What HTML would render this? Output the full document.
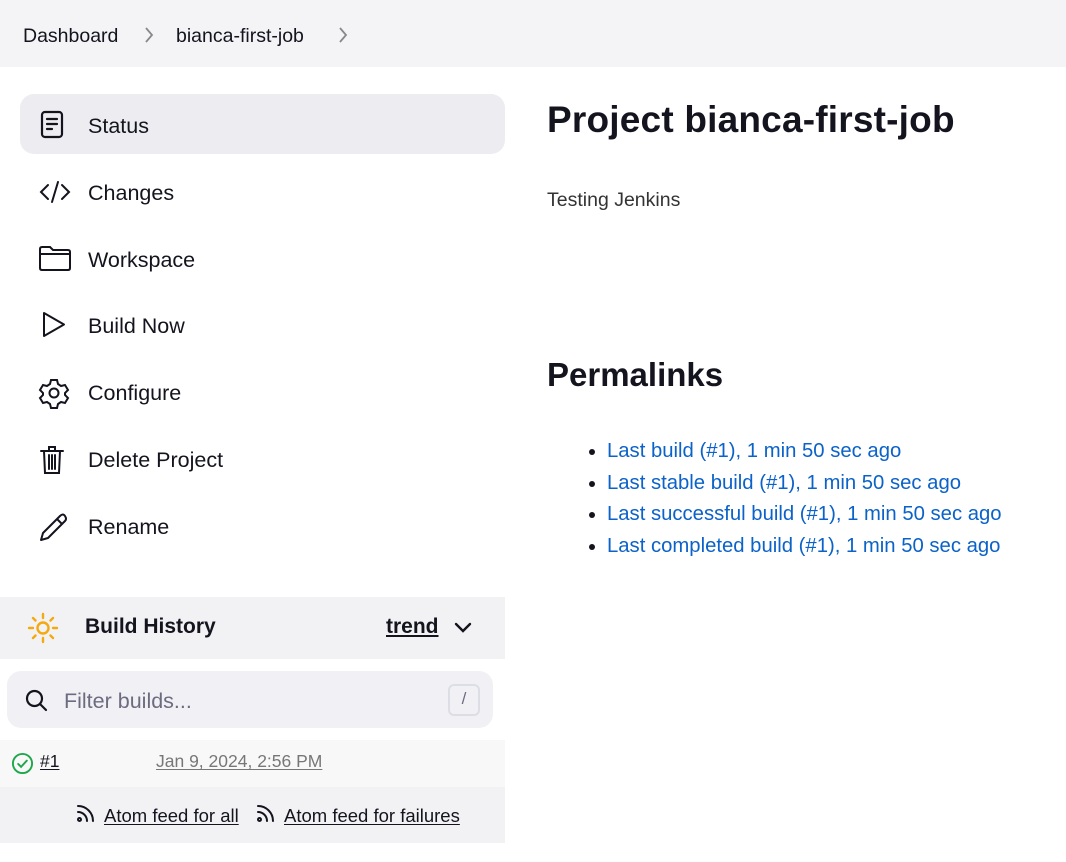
<!DOCTYPE html>
<html><head><style>
*{margin:0;padding:0;box-sizing:border-box}
body{width:1066px;height:862px;background:#fff;font-family:"Liberation Sans",sans-serif;color:#14141f;position:relative;overflow:hidden}
.bc{position:absolute;left:0;top:0;width:1066px;height:67px;background:#f4f4f6;font-size:19.5px}
.bc span{position:absolute;top:25px}
.bc svg{position:absolute;top:27px}
.nav{position:absolute;left:20px;width:485px;height:60px;font-size:21.5px}
.nav svg{position:absolute;left:18px;top:16px}
.nav span{position:absolute;left:68px;top:20px}
.sel{background:#ececf1;border-radius:14px}
h1{position:absolute;left:547px;top:99px;font-size:37px;font-weight:bold;letter-spacing:0.2px}
h2{position:absolute;left:547px;top:356px;font-size:33px;font-weight:bold}
.desc{position:absolute;left:547px;top:189px;font-size:19.5px;color:#333}
ul{position:absolute;left:607px;top:436px;font-size:20.3px;line-height:31.7px;color:#0b62c8}
li::marker{color:#14141f}
.bh{position:absolute;left:0;top:597px;width:505px;height:62px;background:#f2f2f5}
.fb{position:absolute;left:7px;top:671px;width:486px;height:57px;background:#f1f1f5;border-radius:14px}
.row{position:absolute;left:0;top:740px;width:505px;height:47px;background:#f8f8f8}
.feed{position:absolute;left:0;top:787px;width:505px;height:56px;background:#f2f2f5;font-size:18.5px}
u{text-underline-offset:2px}
</style></head><body>
<div class="bc"><span style="left:23px">Dashboard</span><svg style="left:144px" width="10" height="16" viewBox="0 0 10 16" fill="none" stroke="#888" stroke-width="1.8"><path d="M2 1l6 7-6 7"/></svg><span style="left:176px">bianca-first-job</span><svg style="left:338px" width="10" height="16" viewBox="0 0 10 16" fill="none" stroke="#888" stroke-width="1.8"><path d="M2 1l6 7-6 7"/></svg></div>

<div class="nav sel" style="top:94px"><svg width="30" height="30" viewBox="0 0 30 30" fill="none" stroke="#14141f" stroke-width="2.2" stroke-linecap="round"><rect x="4" y="2" width="20" height="25" rx="3"/><path d="M9 9h10M9 14h10M9 19h5"/></svg><span>Status</span></div>
<div class="nav" style="top:161px"><svg width="34" height="30" viewBox="0 0 34 30" fill="none" stroke="#14141f" stroke-width="2" stroke-linecap="round"><path d="M10 8 3 15l7 7M24 8l7 7-7 7M20 5l-6 20"/></svg><span>Changes</span></div>
<div class="nav" style="top:228px"><svg width="34" height="30" viewBox="0 0 34 30" fill="none" stroke="#14141f" stroke-width="2"><path d="M2 5q0-2 2-2h8l3 3h15q2 0 2 2v16q0 2-2 2H4q-2 0-2-2z M2 10h30"/></svg><span>Workspace</span></div>
<div class="nav" style="top:294px"><svg width="30" height="30" viewBox="0 0 30 30" fill="none" stroke="#14141f" stroke-width="2" stroke-linejoin="round"><path d="M6 3v23l20-11.5z"/></svg><span>Build Now</span></div>
<div class="nav" style="top:361px"><svg width="32" height="32" viewBox="0 0 32 32" fill="none" stroke="#14141f" stroke-width="2"><path d="M13 3h6l1 4 3 2 4-1 3 5-3 3v2l3 3-3 5-4-1-3 2-1 4h-6l-1-4-3-2-4 1-3-5 3-3v-2L2 13l3-5 4 1 3-2z"/><circle cx="16" cy="16" r="4.5"/></svg><span>Configure</span></div>
<div class="nav" style="top:428px"><svg width="30" height="32" viewBox="0 0 30 32" fill="none" stroke="#14141f" stroke-width="2" stroke-linecap="round"><path d="M3 7h22M11 7V3h6v4M6 7l1 22h14l1-22M11 11v14M14 11v14M17 11v14"/></svg><span>Delete Project</span></div>
<div class="nav" style="top:495px"><svg width="32" height="32" viewBox="0 0 32 32" fill="none" stroke="#14141f" stroke-width="2" stroke-linejoin="round"><path d="M3 29l2-7L22 5q3-3 5 0t0 5L10 27z M19 8l5 5"/></svg><span>Rename</span></div>

<h1>Project bianca-first-job</h1>
<div class="desc">Testing Jenkins</div>
<h2>Permalinks</h2>
<ul>
<li>Last build (#1), 1 min 50 sec ago</li>
<li>Last stable build (#1), 1 min 50 sec ago</li>
<li>Last successful build (#1), 1 min 50 sec ago</li>
<li>Last completed build (#1), 1 min 50 sec ago</li>
</ul>

<div class="bh">
<svg style="position:absolute;left:26px;top:14px" width="34" height="34" viewBox="0 0 34 34" fill="none" stroke="#f5a90e" stroke-width="2.4" stroke-linecap="round"><circle cx="17" cy="17" r="5.5"/><path d="M17 3v4M17 27v4M3 17h4M27 17h4M7 7l2.5 2.5M24.5 24.5 27 27M7 27l2.5-2.5M24.5 9.5 27 7"/></svg>
<span style="position:absolute;left:85px;top:18px;font-size:21px;font-weight:bold">Build History</span>
<span style="position:absolute;left:386px;top:18px;font-size:21px;font-weight:bold"><u>trend</u></span>
<svg style="position:absolute;left:453px;top:24px" width="20" height="14" viewBox="0 0 20 14" fill="none" stroke="#14141f" stroke-width="2.4" stroke-linecap="round"><path d="M3 3l7 7 7-7"/></svg>
</div>
<div class="fb">
<svg style="position:absolute;left:17px;top:17px" width="26" height="26" viewBox="0 0 26 26" fill="none" stroke="#14141f" stroke-width="2.2" stroke-linecap="round"><circle cx="10.5" cy="10.5" r="7.5"/><path d="M16 16l6 6"/></svg>
<span style="position:absolute;left:57px;top:18px;font-size:21.5px;color:#6d6b80">Filter builds...</span>
<div style="position:absolute;left:441px;top:13px;width:32px;height:32px;border:2px solid #dddde5;border-radius:6px;text-align:center;line-height:26px;color:#6d6b80;font-size:17px">/</div>
</div>
<div class="row">
<svg style="position:absolute;left:11px;top:12px" width="23" height="23" viewBox="0 0 24 24" fill="none" stroke="#1ea64b" stroke-width="2"><circle cx="12" cy="12" r="10"/><path d="M7.5 12.5l3 3 6-6.5" stroke-linecap="round"/></svg>
<span style="position:absolute;left:40px;top:11px;font-size:17.5px"><u>#1</u></span>
<span style="position:absolute;left:156px;top:11px;font-size:17.5px;color:#777"><u>Jan 9, 2024, 2:56 PM</u></span>
</div>
<div class="feed">
<svg style="position:absolute;left:76px;top:16px" width="20" height="20" viewBox="0 0 20 20" fill="none" stroke="#14141f" stroke-width="2" stroke-linecap="round"><circle cx="3.5" cy="16.5" r="1.5"/><path d="M2 9a9 9 0 0 1 9 9M2 3a15 15 0 0 1 15 15"/></svg>
<span style="position:absolute;left:104px;top:18px"><u>Atom feed for all</u></span>
<svg style="position:absolute;left:256px;top:16px" width="20" height="20" viewBox="0 0 20 20" fill="none" stroke="#14141f" stroke-width="2" stroke-linecap="round"><circle cx="3.5" cy="16.5" r="1.5"/><path d="M2 9a9 9 0 0 1 9 9M2 3a15 15 0 0 1 15 15"/></svg>
<span style="position:absolute;left:284px;top:18px"><u>Atom feed for failures</u></span>
</div>
</body></html>
